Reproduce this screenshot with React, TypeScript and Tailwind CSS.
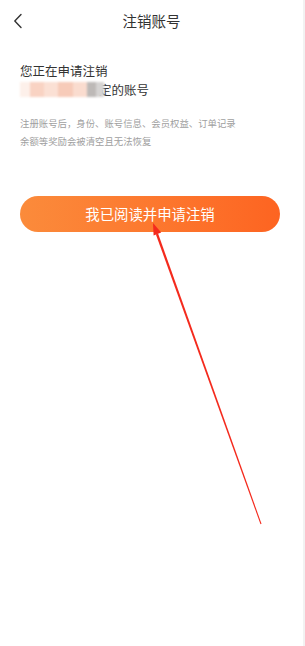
import React from "react";

const font = { fontFamily: '"Noto Sans CJK SC", "Noto Sans", sans-serif' };

const BackIcon = () => (
  <svg width="10" height="16" viewBox="0 0 10 16" fill="none">
    <path d="M8 1.5 1.8 8 8 14.5" stroke="#333" strokeWidth="1.4" strokeLinecap="round" strokeLinejoin="round" />
  </svg>
);

// blurred phone number in the screenshot
const Mosaic = () => (
  <span className="inline-flex h-[15px] blur-[1px] mr-[-5px]">
    <span className="w-[10px] bg-[#fdf0ea]" />
    <span className="w-[14px] bg-[#f9d3c3]" />
    <span className="w-[14px] bg-[#fbe0d4]" />
    <span className="w-[15px] bg-[#f7cbb9]" />
    <span className="w-[14px] bg-[#fadccf]" />
    <span className="w-[9px] bg-[#bdb9b7]" />
    <span className="w-[8px] bg-[#d5d3d2]" />
  </span>
);

const Arrow = () => (
  <svg className="absolute left-0 top-0 pointer-events-none" width="305" height="646" viewBox="0 0 305 646">
    <polygon points="158.1,233.6 155.9,234.4 260.5,524.2 261.5,523.8" fill="#f42a1d" />
    <polygon points="153,223 161.2,232.6 153.6,235.5" fill="#f42a1d" />
  </svg>
);

export default function App() {
  return (
    <div className="relative w-[305px] h-[646px] bg-white flex overflow-hidden" style={font}>
      <div className="flex-1 flex flex-col">
        {/* header */}
        <div className="h-[42px] flex items-center relative px-3">
          <button type="button" className="flex items-center h-full pl-[1px]">
            <BackIcon />
          </button>
          <h1 className="absolute left-0 right-0 text-center text-[14.5px] text-[#333] pointer-events-none">
            注销账号
          </h1>
        </div>

        {/* notice */}
        <div className="pl-5 pr-[23px] mt-[19px]">
          <p className="text-[12.5px] leading-[19px] text-[#333]">您正在申请注销</p>
          <p className="text-[12.5px] leading-[19px] text-[#333] flex items-center">
            <Mosaic />
            <span>定的账号</span>
          </p>
          <div className="mt-[15px] text-[9.4px] leading-[18px] text-[#a0a0a0]">
            <p>注册账号后，身份、账号信息、会员权益、订单记录</p>
            <p>余额等奖励会被清空且无法恢复</p>
          </div>
          <button
            type="button"
            className="mt-[46px] w-full h-[36px] rounded-full bg-gradient-to-r from-[#fb8b3b] to-[#fd6421] text-white text-[14.4px]"
          >
            我已阅读并申请注销
          </button>
        </div>
      </div>
      <div className="w-[2px] bg-[#f2f2f2]" />
      <Arrow />
    </div>
  );
}
